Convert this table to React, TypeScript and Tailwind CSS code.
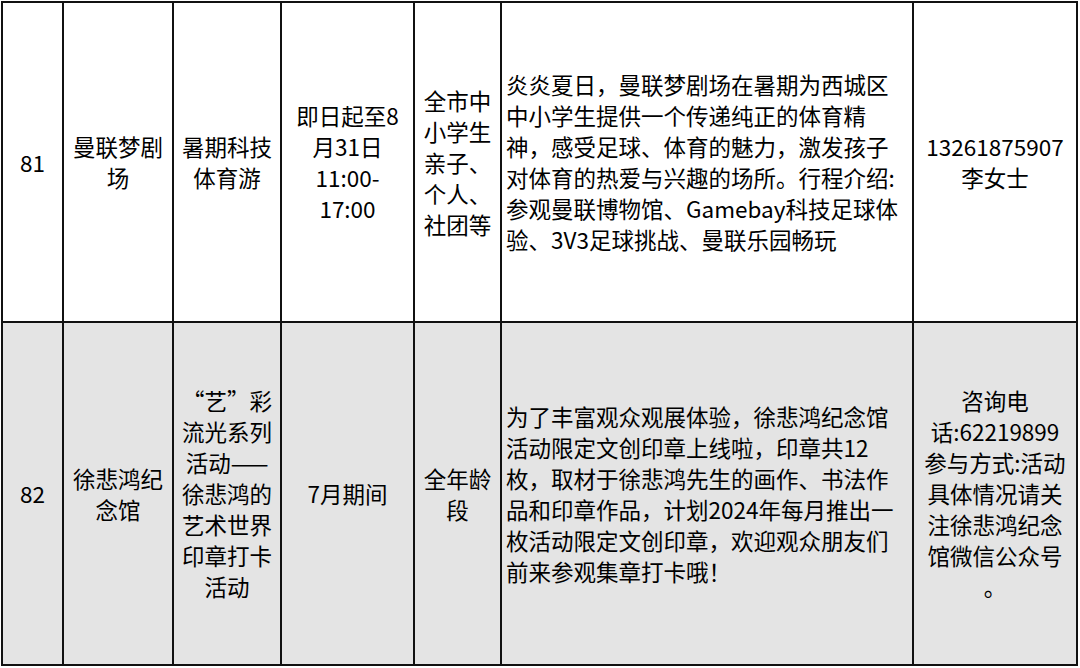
const font = {
  fontFamily: '"Noto Sans CJK SC", "Noto Sans", sans-serif',
};

type Cell = { lines: string[]; left?: boolean };

const rows: Cell[][] = [
  [
    { lines: ["81"] },
    { lines: ["曼联梦剧", "场"] },
    { lines: ["暑期科技", "体育游"] },
    { lines: ["即日起至8", "月31日", "11:00-", "17:00"] },
    { lines: ["全市中", "小学生", "亲子、", "个人、", "社团等"] },
    {
      left: true,
      lines: [
        "炎炎夏日，曼联梦剧场在暑期为西城区",
        "中小学生提供一个传递纯正的体育精",
        "神，感受足球、体育的魅力，激发孩子",
        "对体育的热爱与兴趣的场所。行程介绍:",
        "参观曼联博物馆、Gamebay科技足球体",
        "验、3V3足球挑战、曼联乐园畅玩",
      ],
    },
    { lines: ["13261875907", "李女士"] },
  ],
  [
    { lines: ["82"] },
    { lines: ["徐悲鸿纪", "念馆"] },
    {
      lines: ["“艺”彩", "流光系列", "活动——", "徐悲鸿的", "艺术世界", "印章打卡", "活动"],
    },
    { lines: ["7月期间"] },
    { lines: ["全年龄", "段"] },
    {
      left: true,
      lines: [
        "为了丰富观众观展体验，徐悲鸿纪念馆",
        "活动限定文创印章上线啦，印章共12",
        "枚，取材于徐悲鸿先生的画作、书法作",
        "品和印章作品，计划2024年每月推出一",
        "枚活动限定文创印章，欢迎观众朋友们",
        "前来参观集章打卡哦！",
      ],
    },
    {
      lines: [
        "咨询电",
        "话:62219899",
        "参与方式:活动",
        "具体情况请关",
        "注徐悲鸿纪念",
        "馆微信公众号",
        "。",
      ],
    },
  ],
];

export default function App() {
  return (
    <div className="w-[1080px] h-[668px] bg-white pl-[1px] pt-[1px]" style={font}>
      <div className="w-[1077px] border-2 border-[#111] grid grid-cols-[61px_110px_108px_133px_87px_412px_162px] grid-rows-[320px_341px] text-[22.5px] leading-[31px] text-black">
        {rows.map((row, ri) =>
          row.map((cell, ci) => (
            <div
              key={`${ri}-${ci}`}
              className={[
                "flex flex-col justify-center",
                cell.left ? "items-start pl-[4px]" : "items-center text-center",
                ci < 6 ? "border-r-2 border-[#111]" : "",
                ri === 0 ? "border-b-2 border-[#111] bg-white" : "bg-[#e4e4e4]",
              ].join(" ")}
            >
              {cell.lines.map((l, li) => (
                <div key={li} className="whitespace-nowrap">
                  {l}
                </div>
              ))}
            </div>
          ))
        )}
      </div>
    </div>
  );
}
